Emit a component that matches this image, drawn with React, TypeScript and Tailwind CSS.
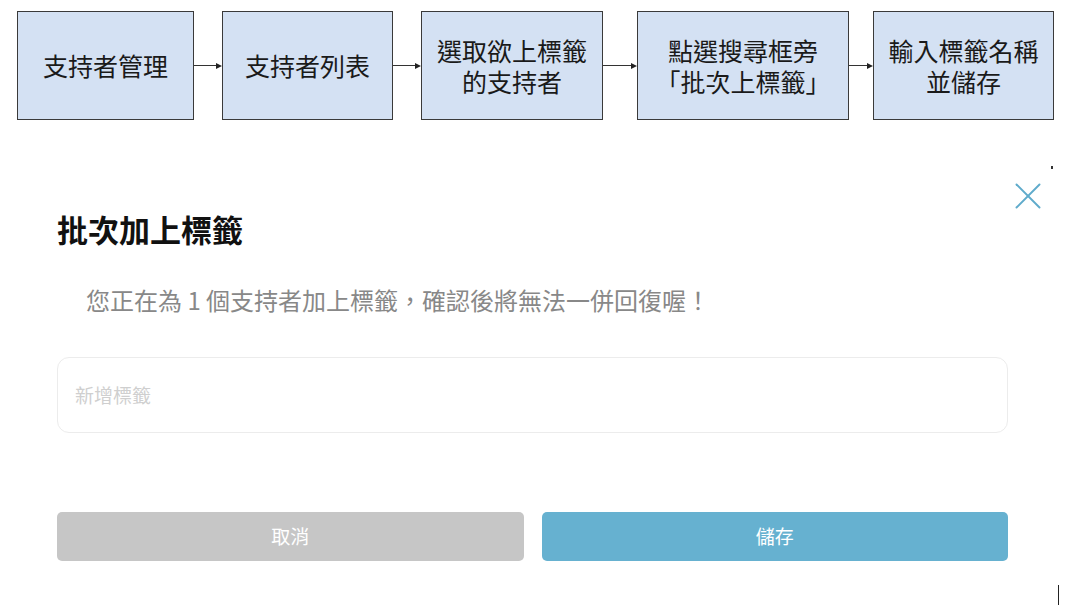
import { X } from 'lucide-react';

const steps = [
  { label: '支持者管理', width: 'w-[177px]' },
  { label: '支持者列表', width: 'w-[171px]' },
  { label: '選取欲上標籤\n的支持者', width: 'w-[182px]' },
  { label: '點選搜尋框旁\n「批次上標籤」', width: 'w-[212px]' },
  { label: '輸入標籤名稱\n並儲存', width: 'w-[181px]' },
];

const arrowWidths = ['w-[28px]', 'w-[28px]', 'w-[34px]', 'w-[24px]'];

function Arrow({ width }: { width: string }) {
  return (
    <div className={`${width} flex items-center`}>
      <div className="flex-1 h-px bg-[#333]" />
      <div className="w-0 h-0 border-y-[3px] border-y-transparent border-l-[6px] border-l-[#222]" />
    </div>
  );
}

export default function App() {
  const font = { fontFamily: '"Noto Sans CJK TC", "Noto Sans", sans-serif' };

  return (
    <div className="relative w-[1080px] h-[608px] bg-white overflow-hidden" style={font}>
      {/* flow chart */}
      <div className="flex items-center pt-[11px] pl-[17px]">
        {steps.map((step, i) => (
          <div key={i} className="flex items-center">
            <div
              className={`${step.width} h-[109px] bg-[#d4e1f3] border border-[#3a3a3a] flex items-center justify-center`}
            >
              <p className="text-center text-[25px] leading-[31px] text-[#1a1a1a] whitespace-pre-line">
                {step.label}
              </p>
            </div>
            {i < arrowWidths.length && <Arrow width={arrowWidths[i]} />}
          </div>
        ))}
      </div>

      {/* modal */}
      <button className="absolute left-[1005px] top-[173px] w-[46px] h-[46px]">
        <X className="w-[46px] h-[46px] text-[#5fabcb]" strokeWidth={1} />
      </button>

      <div className="pl-[57px] pr-[72px]">
        <h2 className="mt-[89px] text-[31px] leading-[40px] font-bold text-[#111]">批次加上標籤</h2>
        <p className="mt-[35px] ml-[29px] text-[24px] leading-[32px] text-[#888]">
          您正在為 1 個支持者加上標籤，確認後將無法一併回復喔！
        </p>

        <div className="mt-[41px] h-[76px] rounded-[12px] border border-[#ececec] flex items-center px-[17px]">
          <input
            className="w-full outline-none bg-transparent text-[19px] placeholder:text-[#cfcfcf]"
            placeholder="新增標籤"
          />
        </div>

        <div className="mt-[79px] flex gap-[18px]">
          <button className="flex-1 h-[49px] rounded-[5px] bg-[#c6c6c6] text-white text-[19px]">取消</button>
          <button className="flex-1 h-[49px] rounded-[5px] bg-[#66b1d0] text-white text-[19px]">儲存</button>
        </div>
      </div>

      {/* stray marks */}
      <div className="absolute left-[1051px] top-[166px] w-[2px] h-[3px] bg-[#333]" />
      <div className="absolute left-[1058px] top-[585px] w-px h-[20px] bg-[#222]" />
    </div>
  );
}
